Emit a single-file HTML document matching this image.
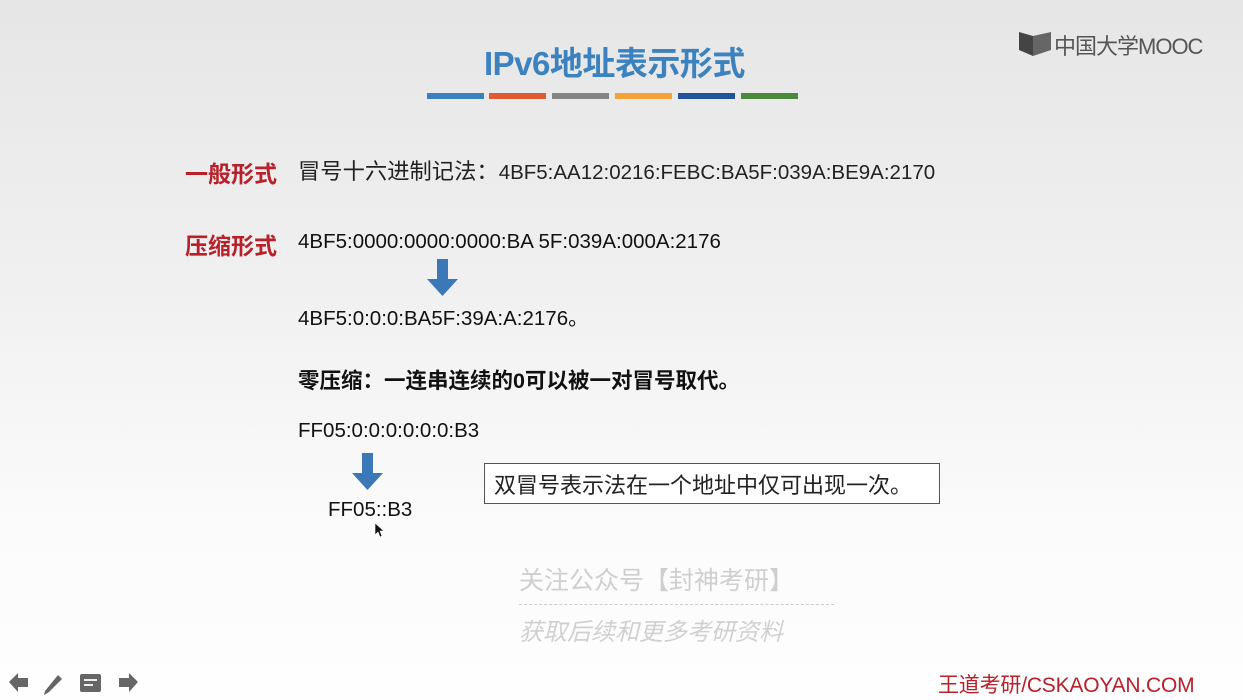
<!DOCTYPE html>
<html><head><meta charset="utf-8"><style>
*{margin:0;padding:0}
body{width:1243px;height:700px;overflow:hidden;position:relative;background:linear-gradient(#e6e6e6 0%,#f0f0f0 40%,#fbfbfb 75%,#fefefe 100%);font-family:"Liberation Sans","Noto Sans CJK SC",sans-serif;color:#111}
.a{position:absolute;white-space:nowrap}
.t{font-size:20.5px}
.r{color:#b8202a;font-weight:bold;font-size:23px}
.bar{position:absolute;top:93px;height:6px;width:57px}
</style></head><body>
<div class="a" style="left:484px;top:37px;font-size:33px;font-weight:bold;color:#3c82bf;letter-spacing:-0.5px">IPv6地址表示形式</div>
<div class="bar" style="left:427px;background:#3a7fc0"></div>
<div class="bar" style="left:489px;background:#e05a32"></div>
<div class="bar" style="left:552px;background:#848484"></div>
<div class="bar" style="left:615px;background:#f5a23a"></div>
<div class="bar" style="left:678px;background:#22529a"></div>
<div class="bar" style="left:741px;background:#4a8a3a"></div>
<svg class="a" style="left:1019px;top:30px" width="34" height="26" viewBox="0 0 34 26"><path d="M0 2 L14 6 L14 26 L0 20Z" fill="#444"/><path d="M14 6 L32 2 L32 20 L14 26Z" fill="#666"/></svg>
<div class="a" style="left:1054px;top:29px;font-size:22px;color:#555;letter-spacing:-1px">中国大学MOOC</div>
<div class="a r" style="left:185px;top:155px">一般形式</div>
<div class="a t" style="left:298px;top:154px;color:#222"><span style="font-size:22.3px">冒号十六进制记法：</span>4BF5:AA12:0216:FEBC:BA5F:039A:BE9A:2170</div>
<div class="a r" style="left:185px;top:227px">压缩形式</div>
<div class="a t" style="left:298px;top:230px">4BF5:0000:0000:0000:BA 5F:039A:000A:2176</div>
<svg class="a" style="left:427px;top:259px" width="31" height="37"><path d="M10 0H21V20H31L15.5 37L0 20H10Z" fill="#3a78b8"/></svg>
<div class="a t" style="left:298px;top:301px">4BF5:0:0:0:BA5F:39A:A:2176。</div>
<div class="a" style="left:298px;top:364px;font-weight:bold;font-size:21.5px">零压缩：一连串连续的0可以被一对冒号取代。</div>
<div class="a t" style="left:298px;top:419px">FF05:0:0:0:0:0:0:B3</div>
<svg class="a" style="left:352px;top:453px" width="31" height="37"><path d="M10 0H21V20H31L15.5 37L0 20H10Z" fill="#3a78b8"/></svg>
<div class="a t" style="left:328px;top:498px">FF05::B3</div>
<svg class="a" style="left:374px;top:522px" width="10" height="16"><path d="M1 1V13L4 10L6 15L8 14L6 9H10Z" fill="#111" stroke="#fff" stroke-width=".6"/></svg>
<div class="a" style="left:484px;top:463px;width:454px;height:39px;border:1px solid #555;background:#fff"></div>
<div class="a" style="left:494px;top:468px;font-size:22px;color:#222">双冒号表示法在一个地址中仅可出现一次。</div>
<div class="a" style="left:519px;top:561px;font-size:25px;color:#cfcfcf">关注公众号【封神考研】</div>
<div class="a" style="left:519px;top:604px;width:315px;border-top:1px dashed #ccc"></div>
<div class="a" style="left:519px;top:612px;font-size:24px;color:#d0d0d0;font-style:italic">获取后续和更多考研资料</div>
<svg class="a" style="left:6px;top:670px" width="135" height="26" viewBox="0 0 135 26">
<path d="M3 12L12 3V8H22V17H12V22Z" fill="#666"/>
<path d="M40 24L38 25L39 21L52 5L56 9L43 22Z" fill="#666"/>
<rect x="74" y="4" width="21" height="18" rx="2" fill="#666"/><rect x="78" y="9" width="13" height="2" fill="#eee"/><rect x="78" y="14" width="9" height="2" fill="#eee"/>
<path d="M132 12L123 3V8H113V17H123V22Z" fill="#666"/></svg>
<div class="a" style="left:938px;top:669px;font-size:21px;color:#b8202a;letter-spacing:-0.2px">王道考研/CSKAOYAN.COM</div>
</body></html>
